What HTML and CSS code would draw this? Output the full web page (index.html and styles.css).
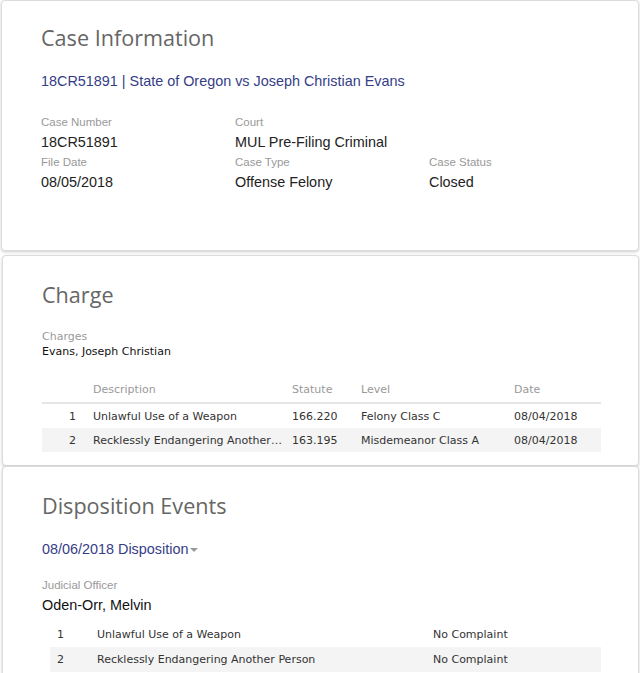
FILE: index.html
```html
<!DOCTYPE html>
<html>
<head>
<meta charset="utf-8">
<link rel="stylesheet" href="styles.css">
</head>
<body>
<section class="card card-info">
  <h2 class="card-title">Case Information</h2>
  <a class="case-link" href="#">18CR51891 | State of Oregon vs Joseph Christian Evans</a>
  <div class="fields">
    <div class="field"><div class="label">Case Number</div><div class="value">18CR51891</div></div>
    <div class="field"><div class="label">Court</div><div class="value">MUL Pre-Filing Criminal</div></div>
    <div class="field"></div>
    <div class="field"><div class="label">File Date</div><div class="value">08/05/2018</div></div>
    <div class="field"><div class="label">Case Type</div><div class="value">Offense Felony</div></div>
    <div class="field"><div class="label">Case Status</div><div class="value">Closed</div></div>
  </div>
</section>

<section class="card card-charge">
  <h2 class="card-title">Charge</h2>
  <div class="small-label">Charges</div>
  <div class="party">Evans, Joseph Christian</div>
  <table class="charges">
    <thead>
      <tr><th class="c-num"></th><th class="c-desc">Description</th><th class="c-stat">Statute</th><th class="c-level">Level</th><th class="c-date">Date</th></tr>
    </thead>
    <tbody>
      <tr><td class="c-num">1</td><td class="c-desc">Unlawful Use of a Weapon</td><td>166.220</td><td>Felony Class C</td><td>08/04/2018</td></tr>
      <tr class="alt"><td class="c-num">2</td><td class="c-desc">Recklessly Endangering Another…</td><td>163.195</td><td>Misdemeanor Class A</td><td>08/04/2018</td></tr>
    </tbody>
  </table>
</section>

<section class="card card-dispo">
  <h2 class="card-title">Disposition Events</h2>
  <a class="dispo-link" href="#">08/06/2018 Disposition<span class="caret"></span></a>
  <div class="label officer-label">Judicial Officer</div>
  <div class="officer">Oden-Orr, Melvin</div>
  <table class="dispo">
    <tbody>
      <tr><td class="d-num">1</td><td class="d-desc">Unlawful Use of a Weapon</td><td class="d-res">No Complaint</td></tr>
      <tr class="alt"><td class="d-num">2</td><td class="d-desc">Recklessly Endangering Another Person</td><td class="d-res">No Complaint</td></tr>
    </tbody>
  </table>
</section>
</body>
</html>
```

FILE: styles.css
```css
html, body {
  margin: 0;
  padding: 0;
  background: #ffffff;
}
body {
  font-family: "Liberation Sans", Arial, sans-serif;
  color: #222;
  overflow: hidden;
}
.card {
  background: #fff;
  border: 1px solid #dcdcdc;
  border-radius: 4px;
  box-shadow: 0 1px 3px rgba(0,0,0,0.2);
  box-sizing: border-box;
}
.card-info {
  margin: 0 1px 0 1px;
  height: 251px;
  padding: 22px 36px 0 39px;
}
.card-charge {
  margin: 4px 1px 0 2px;
  height: 211px;
  padding: 24px 36px 0 39px;
}
.card-dispo {
  margin: 0 1px 0 2px;
  height: 230px;
  padding: 24px 36px 0 39px;
}
.card-title {
  margin: 0;
  font-family: "Open Sans", sans-serif;
  font-weight: 400;
  font-size: 21.6px;
  line-height: 30px;
  color: #666;
}
.case-link, .dispo-link {
  display: block;
  margin-top: 18px;
  font-size: 14.4px;
  line-height: 20px;
  color: #353d87;
  text-decoration: none;
}
.fields {
  margin-top: 23px;
  display: grid;
  grid-template-columns: 194px 194px 194px;
}
.field {
  height: 40px;
}
.label {
  font-size: 11.5px;
  line-height: 16px;
  color: #999;
}
.value {
  font-size: 14.4px;
  line-height: 24px;
  color: #222;
}
.small-label {
  margin-top: 20px;
  font-family: "DejaVu Sans", Verdana, sans-serif;
  font-size: 11px;
  line-height: 14px;
  color: #999;
}
.party {
  font-family: "DejaVu Sans", Verdana, sans-serif;
  font-size: 11px;
  line-height: 15px;
  color: #111;
}
table {
  border-collapse: collapse;
  font-family: "DejaVu Sans", Verdana, sans-serif;
  font-size: 11px;
  color: #333;
}
.charges {
  margin-top: 18px;
  width: 559px;
}
.charges th {
  font-weight: 400;
  color: #999;
  text-align: left;
  height: 25px;
  padding: 0;
  border-bottom: 2px solid #e6e6e6;
}
.charges td {
  height: 24px;
  padding: 0;
  text-align: left;
  white-space: nowrap;
}
.charges .c-num {
  width: 34px;
  text-align: right;
  padding-right: 17px;
}
.charges .c-desc { width: 199px; }
.charges .c-stat { width: 69px; }
.charges .c-level { width: 153px; }
tr.alt td {
  background: #f4f4f4;
}
.caret {
  display: inline-block;
  width: 0;
  height: 0;
  margin-left: 2px;
  vertical-align: middle;
  border-left: 4px solid transparent;
  border-right: 4px solid transparent;
  border-top: 4px solid #999;
}
.officer-label {
  margin-top: 18px;
}
.officer {
  font-size: 14.4px;
  line-height: 24px;
  color: #111;
}
.dispo {
  margin-top: 5px;
  margin-left: 8px;
  width: 551px;
}
.dispo td {
  height: 25px;
  padding: 0;
  white-space: nowrap;
}
.dispo .d-num {
  width: 40px;
  padding-left: 7px;
}
.dispo .d-desc { width: 336px; }
```
